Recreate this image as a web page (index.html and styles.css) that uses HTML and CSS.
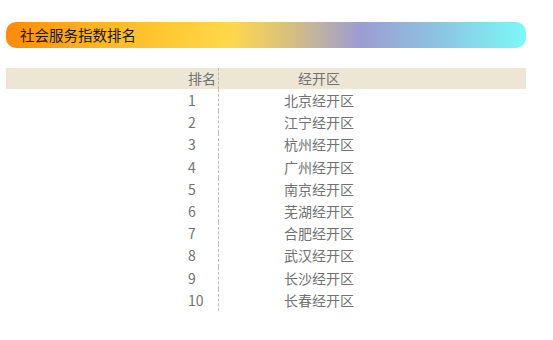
FILE: index.html
```html
<!DOCTYPE html>
<html lang="zh">
<head>
<meta charset="utf-8">
<link rel="stylesheet" href="styles.css">
</head>
<body>
<div class="panel">
  <div class="title-bar"><span class="title">社会服务指数排名</span></div>
  <div class="rank-table">
    <div class="row head"><div class="c1">排名</div><div class="c2">经开区</div><div class="c3"></div></div>
    <div class="row"><div class="c1">1</div><div class="c2">北京经开区</div><div class="c3"></div></div>
    <div class="row"><div class="c1">2</div><div class="c2">江宁经开区</div><div class="c3"></div></div>
    <div class="row"><div class="c1">3</div><div class="c2">杭州经开区</div><div class="c3"></div></div>
    <div class="row"><div class="c1">4</div><div class="c2">广州经开区</div><div class="c3"></div></div>
    <div class="row"><div class="c1">5</div><div class="c2">南京经开区</div><div class="c3"></div></div>
    <div class="row"><div class="c1">6</div><div class="c2">芜湖经开区</div><div class="c3"></div></div>
    <div class="row"><div class="c1">7</div><div class="c2">合肥经开区</div><div class="c3"></div></div>
    <div class="row"><div class="c1">8</div><div class="c2">武汉经开区</div><div class="c3"></div></div>
    <div class="row"><div class="c1">9</div><div class="c2">长沙经开区</div><div class="c3"></div></div>
    <div class="row"><div class="c1">10</div><div class="c2">长春经开区</div><div class="c3"></div></div>
  </div>
</div>
</body>
</html>
```
FILE: styles.css
```css
html, body {
  margin: 0;
  padding: 0;
  background: #ffffff;
}
body {
  font-family: "Noto Sans CJK SC", "Open Sans", sans-serif;
}
.panel {
  width: 520px;
  padding: 22px 0 0 6px;
}
.title-bar {
  height: 26px;
  border-radius: 10px;
  background: linear-gradient(90deg, #ff8a08 0%, #ffb81c 18%, #ffd84a 43%, #d6bf80 55%, #9d9cd2 68%, #8cc6e2 84%, #7cf8f8 100%);
  display: flex;
  align-items: center;
  padding-left: 14px;
}
.title {
  font-size: 14.5px;
  color: #1a160f;
  line-height: 1;
}
.rank-table {
  margin-top: 20px;
  font-size: 14px;
  color: #727272;
}
.row {
  display: grid;
  grid-template-columns: 213px 200px 1fr;
  height: 22.2px;
  line-height: 22.2px;
}
.row.head {
  height: 21px;
  line-height: 21px;
  background: #ede6d5;
}
.c1 {
  padding-left: 182px;
  border-right: 1px dashed #bdbdbd;
}
.c2 {
  text-align: center;
}
```
